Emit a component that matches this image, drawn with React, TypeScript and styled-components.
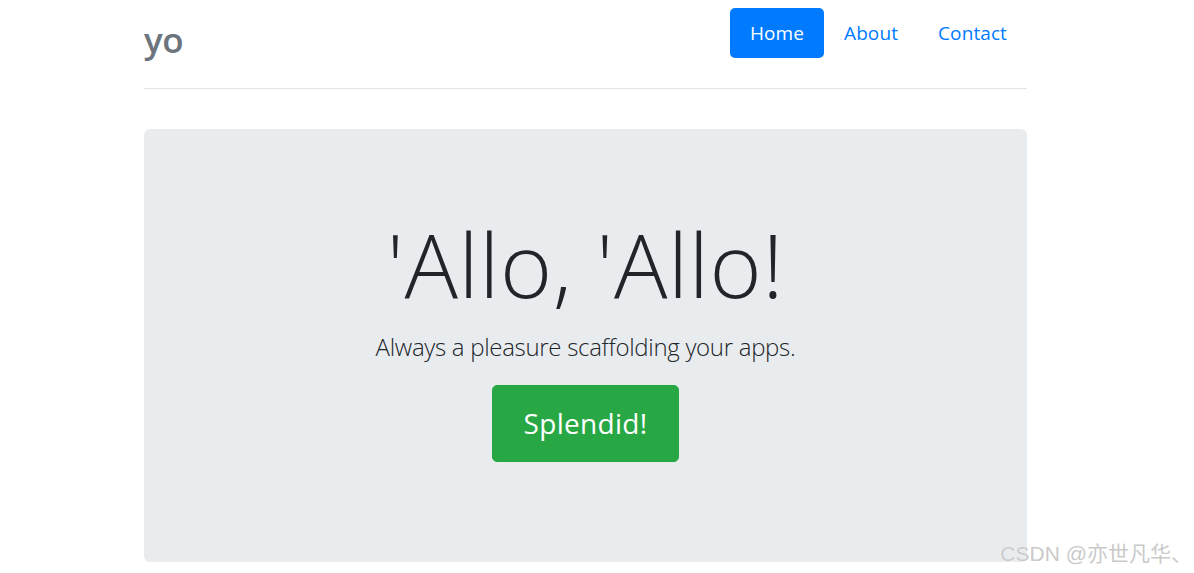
import React from 'react'
import styled, { createGlobalStyle } from 'styled-components'

const GlobalStyle = createGlobalStyle`
  html, body {
    margin: 0;
    padding: 0;
    background: #fff;
  }
  body {
    font-family: 'Open Sans', 'Noto Sans', sans-serif;
    color: #212529;
    overflow: hidden;
  }
`

const Page = styled.div`
  position: relative;
  width: 1194px;
  height: 573px;
  overflow: hidden;
`

const Container = styled.div`
  width: 883px;
  margin-left: 144px;
`

const Header = styled.header`
  display: flex;
  justify-content: space-between;
  align-items: flex-start;
  padding: 8px 0 30px;
  border-bottom: 1px solid #e5e5e5;
`

const Brand = styled.h3`
  margin: 14px 0 0;
  font-size: 35px;
  font-weight: 600;
  line-height: 36px;
  color: #6c757d;
  letter-spacing: -0.5px;
`

const NavList = styled.ul`
  display: flex;
  list-style: none;
  margin: 0;
  padding: 0;
`

const NavLink = styled.a<{ $active?: boolean }>`
  display: block;
  height: 50px;
  box-sizing: border-box;
  padding: 10px 20px;
  font-size: 19px;
  line-height: 30px;
  letter-spacing: 0.1px;
  border-radius: 5px;
  text-decoration: none;
  cursor: pointer;
  color: ${({ $active }) => ($active ? '#fff' : '#007bff')};
  background: ${({ $active }) => ($active ? '#007bff' : 'transparent')};
`

const Jumbotron = styled.section`
  margin-top: 40px;
  height: 433px;
  box-sizing: border-box;
  padding: 80px 40px;
  background: #e9ecef;
  border-radius: 6px;
  text-align: center;
`

const Title = styled.h1`
  margin: 0 0 10px;
  font-size: 89px;
  font-weight: 300;
  line-height: 109px;
  letter-spacing: 0.6px;
`

const Lead = styled.p`
  margin: 0 0 20px;
  font-size: 24px;
  font-weight: 300;
  line-height: 37px;
  letter-spacing: -0.3px;
`

const SuccessButton = styled.a`
  display: inline-block;
  box-sizing: border-box;
  height: 77px;
  width: 187px;
  padding: 17px 0;
  font-size: 28px;
  line-height: 41px;
  letter-spacing: 0.3px;
  color: #fff;
  background: #28a745;
  border: 1px solid #28a745;
  border-radius: 5px;
  text-decoration: none;
  cursor: pointer;
`

const Watermark = styled.div`
  position: absolute;
  right: 2px;
  bottom: 6px;
  font-family: 'Liberation Sans', 'Noto Sans CJK SC', sans-serif;
  font-size: 21px;
  color: #cacaca;
  text-shadow: 0 0 1px #fff;
`

const App: React.FC = () => {
  return (
    <Page>
      <GlobalStyle />
      <Container>
        <Header>
          <Brand>yo</Brand>
          <nav>
            <NavList>
              <li>
                <NavLink $active>Home</NavLink>
              </li>
              <li>
                <NavLink>About</NavLink>
              </li>
              <li>
                <NavLink>Contact</NavLink>
              </li>
            </NavList>
          </nav>
        </Header>
        <Jumbotron>
          <Title>'Allo, 'Allo!</Title>
          <Lead>Always a pleasure scaffolding your apps.</Lead>
          <p>
            <SuccessButton>Splendid!</SuccessButton>
          </p>
        </Jumbotron>
      </Container>
      <Watermark>CSDN @亦世凡华、</Watermark>
    </Page>
  )
}

export default App
